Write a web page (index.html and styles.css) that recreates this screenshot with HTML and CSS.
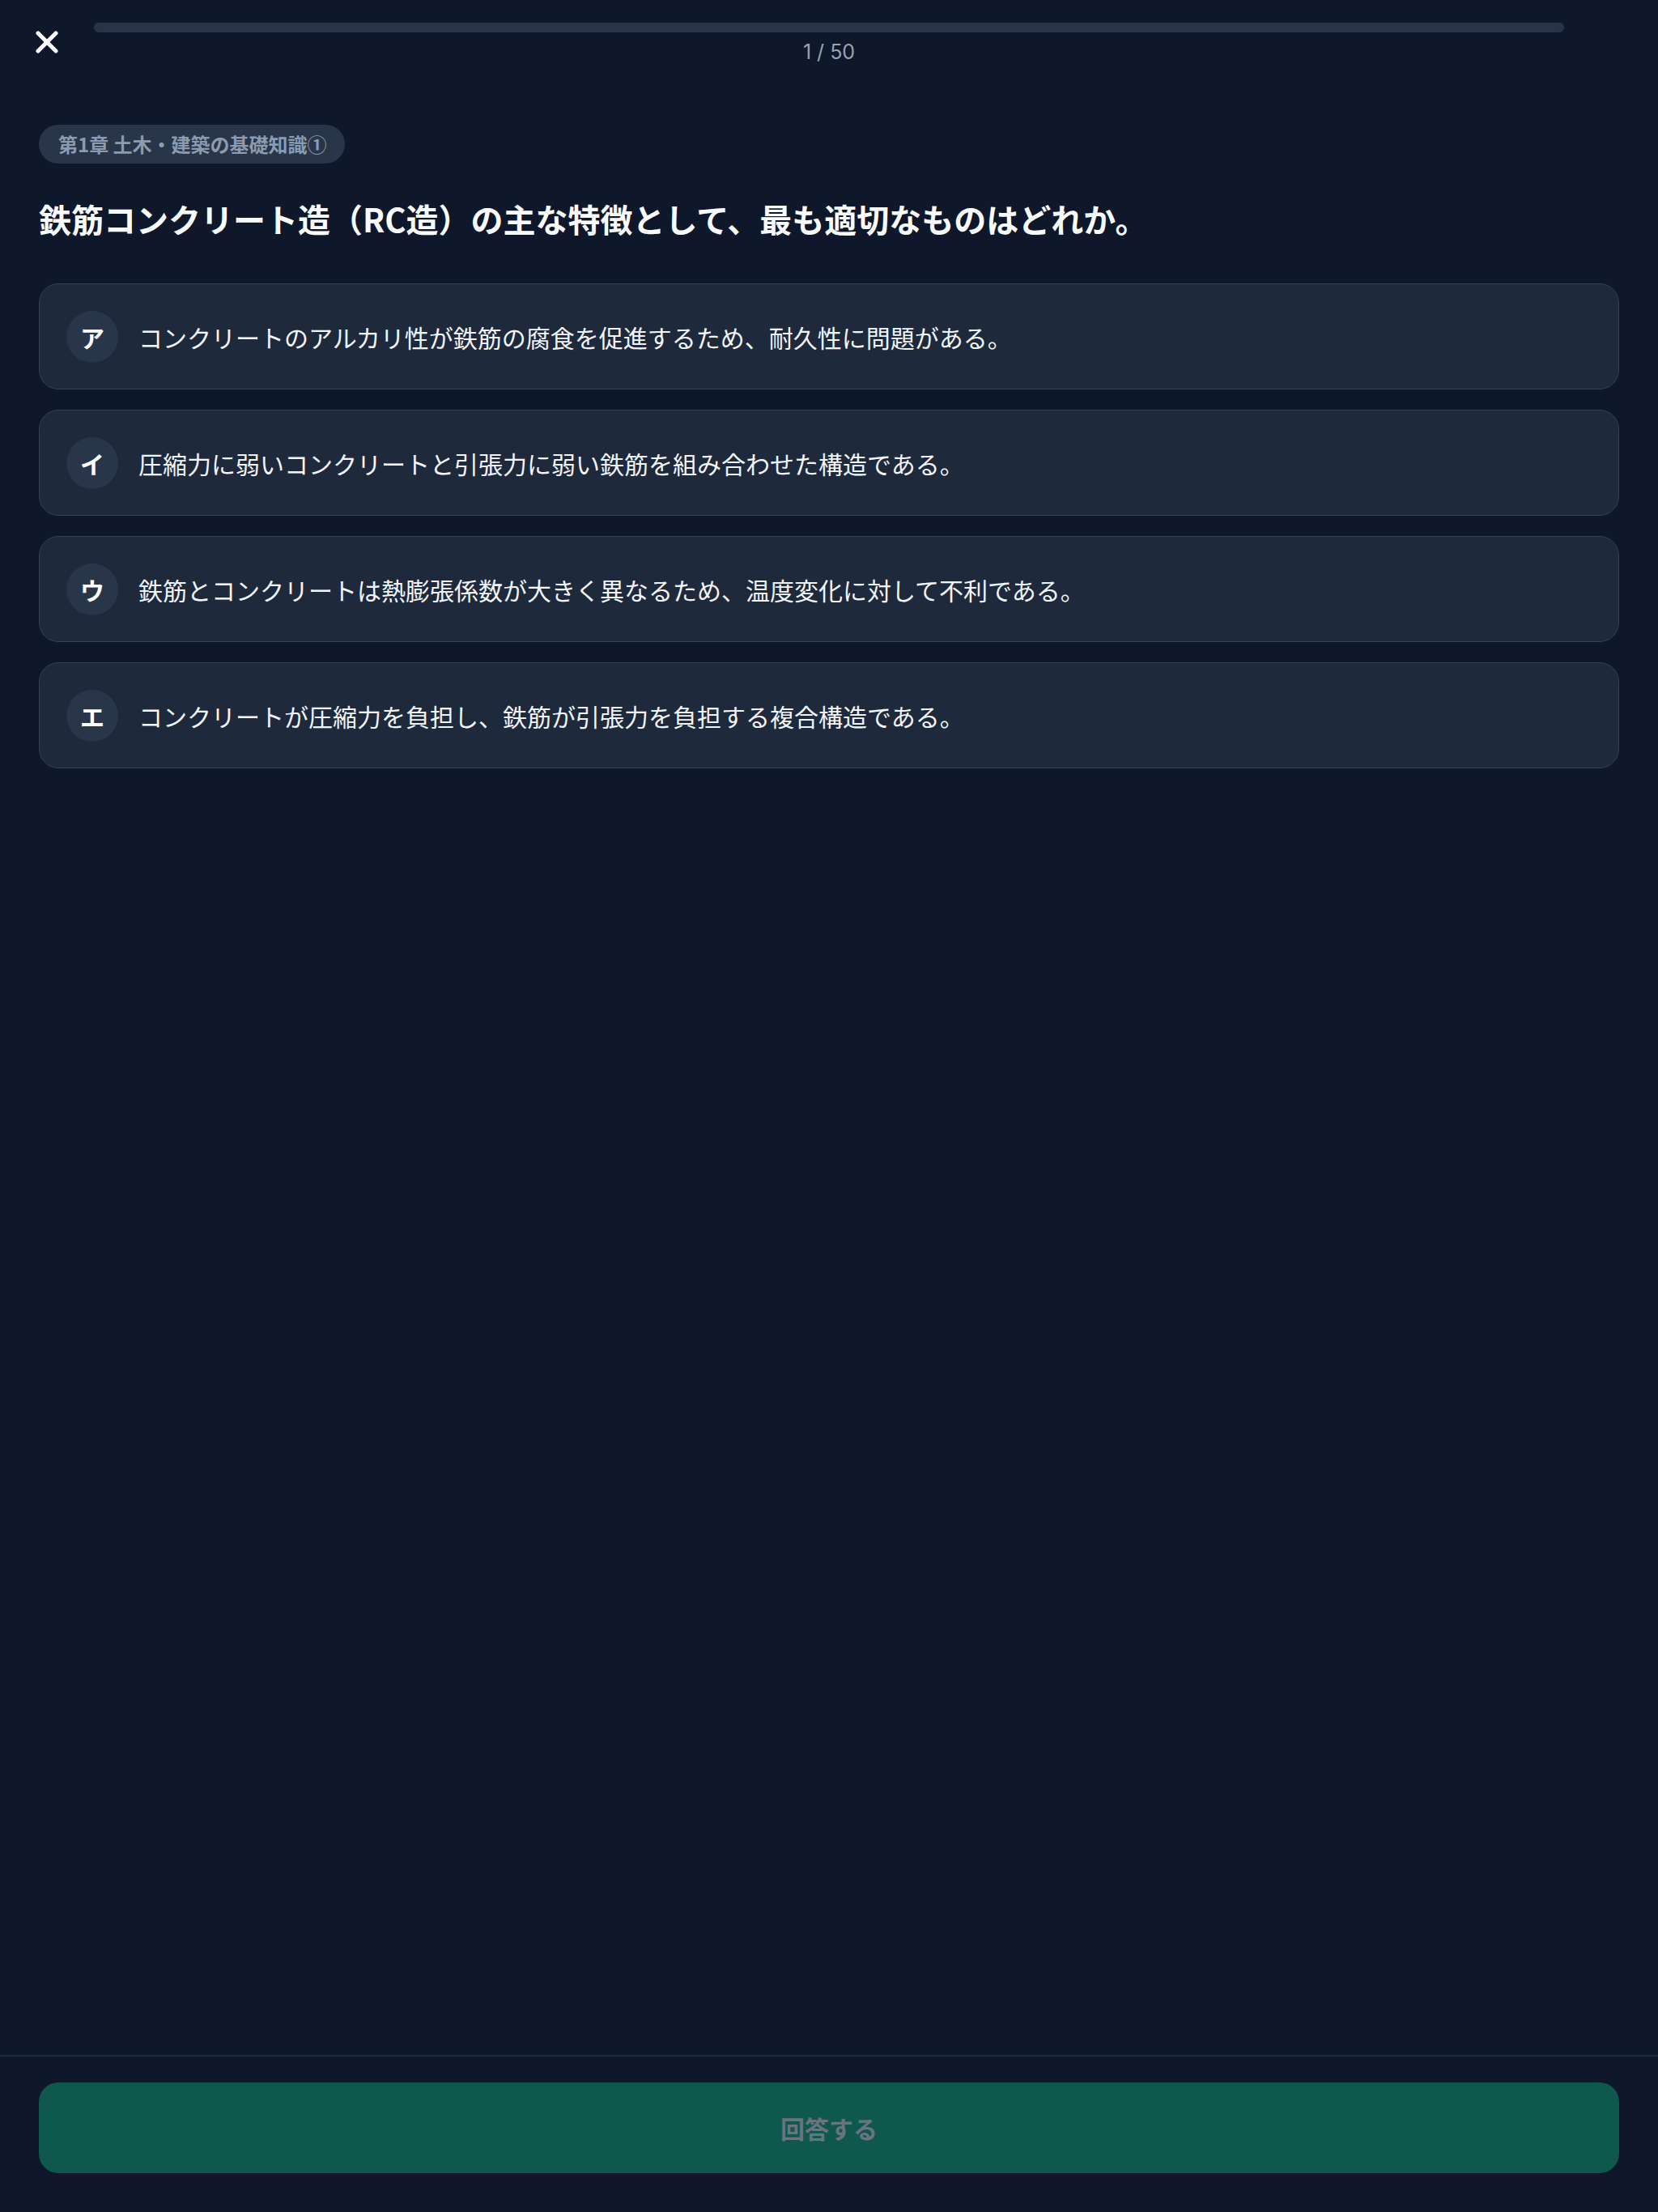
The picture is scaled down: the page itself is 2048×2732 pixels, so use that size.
FILE: index.html
```html
<!DOCTYPE html>
<html lang="ja">
<head>
<meta charset="utf-8">
<title>Quiz</title>
<link rel="stylesheet" href="styles.css">
</head>
<body>
<div class="app">
  <header class="topbar">
    <button class="close" aria-label="閉じる">
      <svg width="28" height="28" viewBox="0 0 28 28" fill="none" stroke="#ffffff" stroke-width="5" stroke-linecap="round">
        <line x1="3" y1="3" x2="25" y2="25"/>
        <line x1="25" y1="3" x2="3" y2="25"/>
      </svg>
    </button>
    <div class="progress">
      <div class="track"><div class="fill" style="width:0%"></div></div>
      <div class="count">1 / 50</div>
    </div>
    <div class="spacer"></div>
  </header>

  <main class="content">
    <div class="badge">第1章 土木・建築の基礎知識①</div>
    <h1 class="question">鉄筋コンクリート造（RC造）の主な特徴として、最も適切なものはどれか。</h1>
    <ul class="options">
      <li class="option"><span class="mark">ア</span><span class="text">コンクリートのアルカリ性が鉄筋の腐食を促進するため、耐久性に問題がある。</span></li>
      <li class="option"><span class="mark">イ</span><span class="text">圧縮力に弱いコンクリートと引張力に弱い鉄筋を組み合わせた構造である。</span></li>
      <li class="option"><span class="mark">ウ</span><span class="text">鉄筋とコンクリートは熱膨張係数が大きく異なるため、温度変化に対して不利である。</span></li>
      <li class="option"><span class="mark">エ</span><span class="text">コンクリートが圧縮力を負担し、鉄筋が引張力を負担する複合構造である。</span></li>
    </ul>
  </main>

  <footer class="footer">
    <button class="submit" disabled>回答する</button>
  </footer>
</div>
</body>
</html>
```

FILE: styles.css
```css
* {
  box-sizing: border-box;
}

html, body {
  margin: 0;
  padding: 0;
  background: #0f172a;
}

body {
  font-family: "Noto Sans CJK JP", "Noto Sans", sans-serif;
  color: #f8fafc;
}

.app {
  min-height: 100vh;
  display: flex;
  flex-direction: column;
}

.topbar {
  display: flex;
  align-items: flex-start;
  padding-top: 28px;
}

.close {
  width: 116px;
  height: 48px;
  margin-top: 0;
  padding: 10px 0 0 0;
  background: none;
  border: none;
  display: flex;
  justify-content: center;
  align-items: flex-start;
  cursor: pointer;
}

.spacer {
  width: 116px;
  flex: none;
}

.progress {
  flex: 1;
  display: flex;
  flex-direction: column;
  align-items: center;
}

.track {
  width: 100%;
  height: 12px;
  border-radius: 6px;
  background: #283548;
  overflow: hidden;
}

.fill {
  height: 100%;
  background: #10b981;
}

.count {
  margin-top: 8px;
  font-family: "Inter", "Noto Sans", sans-serif;
  font-size: 25px;
  line-height: 32px;
  color: #94a3b8;
}

.content {
  flex: 1;
  padding: 74px 48px 0;
}

.badge {
  display: inline-block;
  height: 48px;
  line-height: 48px;
  padding: 0 22px 0 24px;
  border-radius: 24px;
  background: #293548;
  color: #8c9bb0;
  font-size: 24px;
  font-weight: 700;
}

.question {
  margin: 40px 0 52px;
  font-size: 40px;
  line-height: 56px;
  font-weight: 700;
  color: #f8fafc;
}

.options {
  list-style: none;
  margin: 0;
  padding: 0;
  display: flex;
  flex-direction: column;
  gap: 25px;
}

.option {
  display: flex;
  align-items: center;
  gap: 25px;
  min-height: 131px;
  padding: 32px 33px;
  background: #1e293b;
  border: 1px solid #334155;
  border-radius: 24px;
}

.mark {
  flex: none;
  width: 64px;
  height: 64px;
  border-radius: 50%;
  background: #293548;
  display: flex;
  align-items: center;
  justify-content: center;
  font-size: 30px;
  font-weight: 700;
  color: #ffffff;
}

.text {
  font-size: 30px;
  line-height: 44px;
  color: #f1f5f9;
}

.footer {
  border-top: 2px solid #1e293b;
  padding: 32px 48px 48px;
}

.submit {
  width: 100%;
  height: 112px;
  border: none;
  border-radius: 24px;
  background: #0f584d;
  color: #6b7380;
  font-family: "Noto Sans CJK JP", "Noto Sans", sans-serif;
  font-size: 30px;
  font-weight: 700;
}
```
